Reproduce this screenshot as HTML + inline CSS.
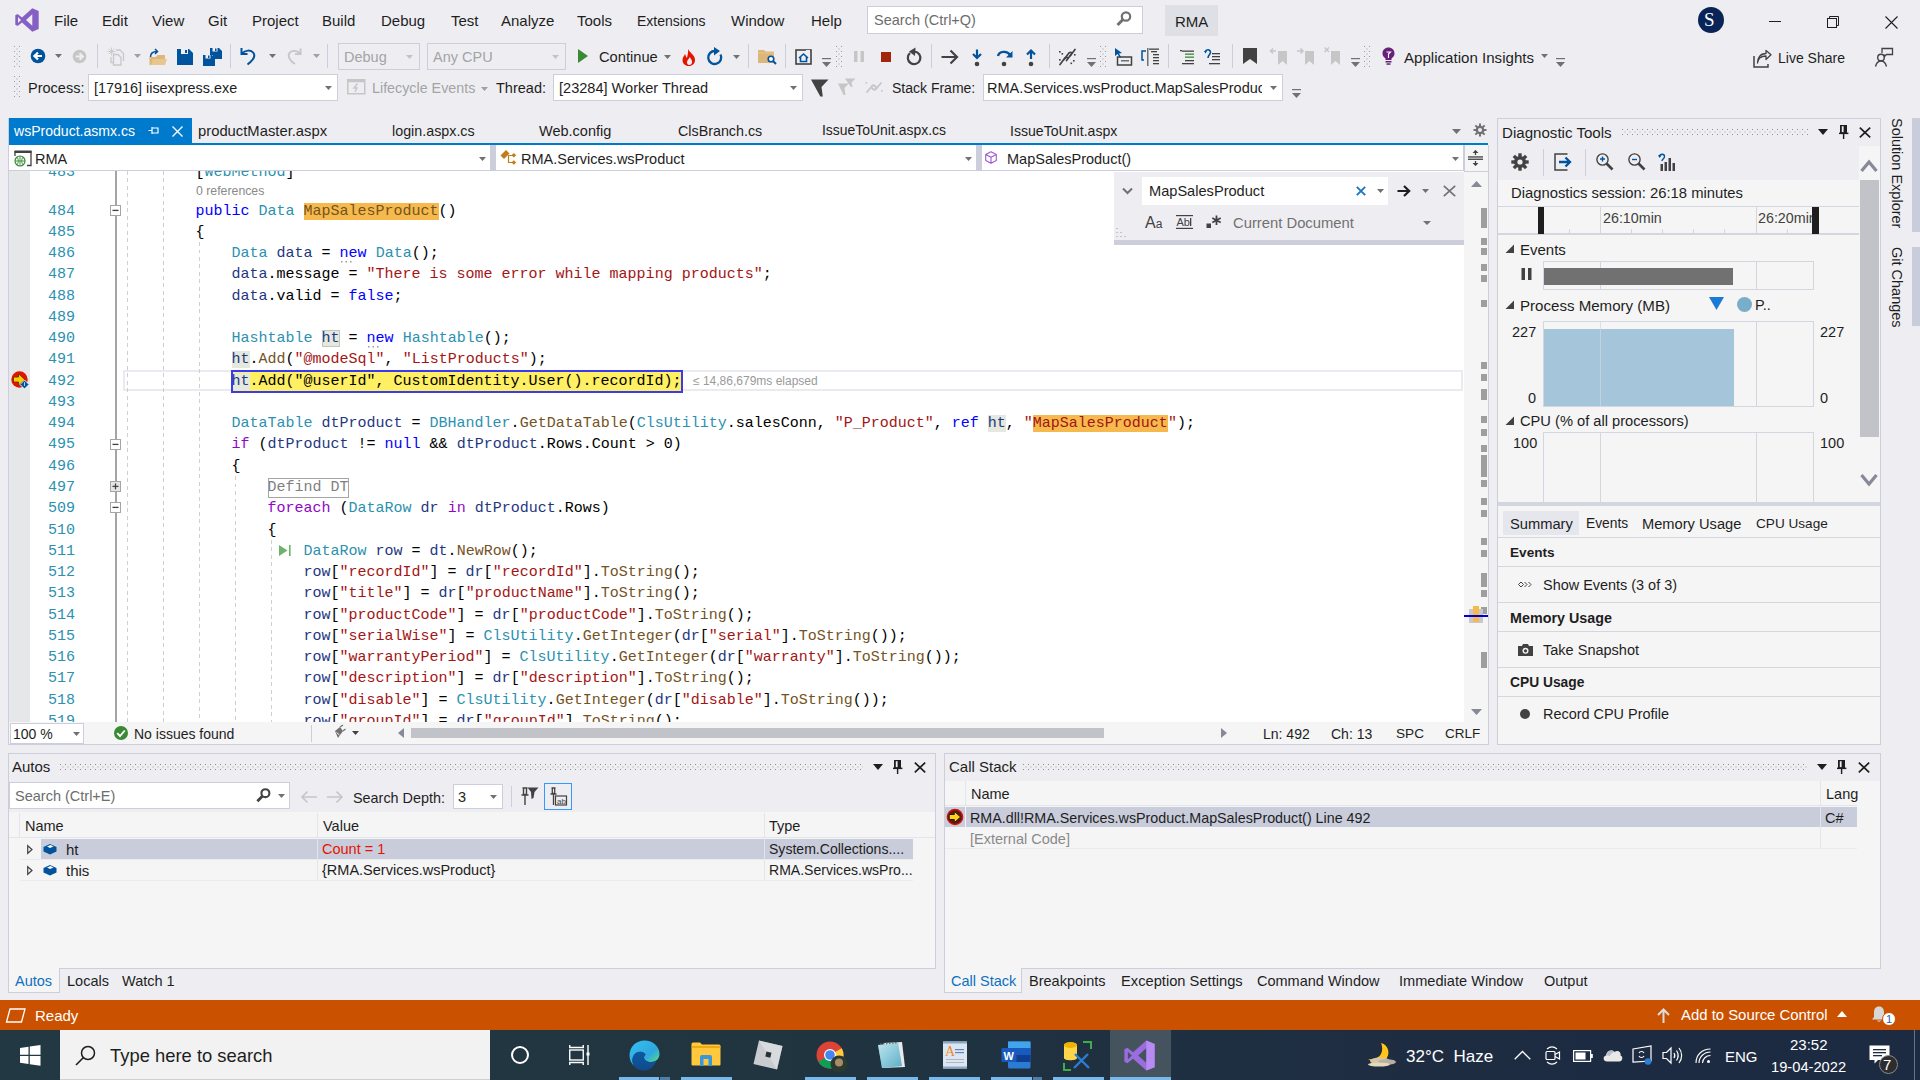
<!DOCTYPE html>
<html><head><meta charset="utf-8">
<style>
*{margin:0;padding:0;box-sizing:border-box}
html,body{width:1920px;height:1080px;overflow:hidden;background:#EEEEF2;font-family:"Liberation Sans",sans-serif;color:#1E1E1E;font-size:15px}
.a{position:absolute}
.t{position:absolute;white-space:nowrap;line-height:1}
.mono{font-family:"Liberation Mono",monospace}
svg{position:absolute;overflow:visible}
/* code */
.cl{position:absolute;left:0;height:21px;white-space:pre;font-family:"Liberation Mono",monospace;font-size:15px;line-height:21px;color:#000}
.ln{position:absolute;width:46px;text-align:right;font-family:"Liberation Mono",monospace;font-size:15px;line-height:21px;color:#2B91AF}
.k{color:#0000FF}.ty{color:#2B91AF}.s{color:#A31515}.m{color:#74531F}.v{color:#1F377F}.c{color:#8F08C4}
</style></head><body>


<!-- ===== TITLE BAR ===== -->
<svg style="left:15px;top:8px" width="24" height="24" viewBox="0 0 24 24"><path d="M17.3 0.3 L23.7 3 V21 L17.3 23.7 L7 14.6 L2.6 18 L0.3 16.8 V7.2 L2.6 6 L7 9.4 Z M17.3 6.2 L11 12 L17.3 17.8 Z M3 9 V15 L6 12 Z" fill="#865FC5" fill-rule="evenodd"/></svg>
<div class="t" style="left:54px;top:13px;font-size:15px">File</div>
<div class="t" style="left:102px;top:13px;font-size:15px">Edit</div>
<div class="t" style="left:152px;top:13px;font-size:15px">View</div>
<div class="t" style="left:208px;top:13px;font-size:15px">Git</div>
<div class="t" style="left:252px;top:13px;font-size:15px">Project</div>
<div class="t" style="left:322px;top:13px;font-size:15px">Build</div>
<div class="t" style="left:381px;top:13px;font-size:15px">Debug</div>
<div class="t" style="left:451px;top:13px;font-size:15px">Test</div>
<div class="t" style="left:501px;top:13px;font-size:15px">Analyze</div>
<div class="t" style="left:577px;top:13px;font-size:15px">Tools</div>
<div class="t" style="left:637px;top:14px;font-size:14px">Extensions</div>
<div class="t" style="left:731px;top:13px;font-size:15px">Window</div>
<div class="t" style="left:811px;top:13px;font-size:15px">Help</div>
<div class="a" style="left:867px;top:6px;width:276px;height:28px;background:#fff;border:1px solid #CCCEDB"></div>
<div class="t" style="left:874px;top:13px;font-size:14.5px;color:#6D6D6D">Search (Ctrl+Q)</div>
<svg style="left:1115px;top:10px" width="18" height="18" viewBox="0 0 18 18"><circle cx="11" cy="6.5" r="4.2" fill="none" stroke="#717171" stroke-width="2.2"/><path d="M8 9.5 L2.5 15" stroke="#717171" stroke-width="3" stroke-linecap="butt"/></svg>
<div class="a" style="left:1165px;top:5px;width:53px;height:31px;background:#DEE0E5"></div>
<div class="t" style="left:1175px;top:14px;font-size:15px;color:#1E1E1E">RMA</div>
<div class="a" style="left:1698px;top:7px;width:26px;height:26px;border-radius:50%;background:#0A2458"></div>
<div class="t" style="left:1704px;top:10px;font-size:19px;color:#fff;font-family:'Liberation Serif',serif">S</div>
<div class="a" style="left:1769px;top:21px;width:12px;height:1px;background:#1E1E1E"></div>
<svg style="left:1826px;top:15px" width="14" height="14" viewBox="0 0 14 14"><rect x="1.5" y="3.5" width="9" height="9" fill="none" stroke="#1E1E1E" stroke-width="1"/><path d="M3.5 3.5 V1.5 H12.5 V10.5 H10.5" fill="none" stroke="#1E1E1E" stroke-width="1"/></svg>
<svg style="left:1885px;top:16px" width="13" height="13" viewBox="0 0 13 13"><path d="M0.5 0.5 L12.5 12.5 M12.5 0.5 L0.5 12.5" stroke="#1E1E1E" stroke-width="1.1"/></svg>

<!-- ===== TOOLBAR 1 ===== -->
<svg style="left:14px;top:46px" width="7" height="22" viewBox="0 0 7 22"><g fill="#A0A0A8"><rect x="0" y="0" width="1" height="1"/><rect x="5" y="0" width="1" height="1"/><rect x="2.5" y="2.5" width="1" height="1"/><rect x="0" y="5" width="1" height="1"/><rect x="5" y="5" width="1" height="1"/><rect x="2.5" y="7.5" width="1" height="1"/><rect x="0" y="10" width="1" height="1"/><rect x="5" y="10" width="1" height="1"/><rect x="2.5" y="12.5" width="1" height="1"/><rect x="0" y="15" width="1" height="1"/><rect x="5" y="15" width="1" height="1"/><rect x="2.5" y="17.5" width="1" height="1"/><rect x="0" y="20" width="1" height="1"/><rect x="5" y="20" width="1" height="1"/></g></svg>
<svg style="left:30px;top:48px" width="16" height="16" viewBox="0 0 16 16"><circle cx="8" cy="8" r="7.3" fill="#00539C"/><path d="M12 8 H5 M8 4.6 L4.4 8 L8 11.4" fill="none" stroke="#fff" stroke-width="2.2"/></svg>
<svg style="left:55px;top:54px" width="7" height="4"><path d="M0 0 H7 L3.5 4 Z" fill="#717171"/></svg>
<svg style="left:72px;top:49px" width="15" height="15" viewBox="0 0 16 16"><circle cx="8" cy="8" r="7.3" fill="#C6C6C6"/><path d="M4 8 H11 M8 4.6 L11.6 8 L8 11.4" fill="none" stroke="#EEEEF2" stroke-width="2.2"/></svg>
<div class="a" style="left:97px;top:44px;width:1px;height:24px;background:#CCCEDB"></div>
<svg style="left:107px;top:47px" width="18" height="19" viewBox="0 0 18 19"><g fill="none" stroke="#C8C8C8" stroke-width="0.9"><path d="M4.5 0.5 V8.5 M0.5 4.5 H8.5 M1.7 1.7 L7.3 7.3 M7.3 1.7 L1.7 7.3"/></g><g fill="none" stroke="#C8C8C8" stroke-width="1.3"><path d="M9 3 H13 L16.5 6.5 V14"/><path d="M6.5 7.5 H11 L14 10.5 V18 H6.5 Z"/><path d="M4 10 V15.5 H6"/></g></svg>
<svg style="left:134px;top:54px" width="7" height="4"><path d="M0 0 H7 L3.5 4 Z" fill="#A0A0A0"/></svg>
<svg style="left:149px;top:48px" width="18" height="18" viewBox="0 0 18 18"><path d="M0.5 9 H7 L8.5 7 H16 V17 H0.5 Z" fill="#DCB67A"/><path d="M2 17 L4 11 H18 L16 17 Z" fill="#E8C78E"/><path d="M1.5 9 C1.5 5 4 3.5 8 3.5 M6 1 L8.5 3.5 L6 6" fill="none" stroke="#00539C" stroke-width="1.5"/></svg>
<svg style="left:177px;top:49px" width="16" height="16" viewBox="0 0 16 16"><path d="M0 0 H12 L16 4 V16 H0 Z" fill="#00539C"/><rect x="4" y="0" width="7" height="5" fill="#EEEEF2"/><rect x="8" y="1" width="2" height="3" fill="#00539C"/></svg>
<svg style="left:203px;top:48px" width="19" height="18" viewBox="0 0 19 18"><path d="M7 0 H16 L19 3 V11 H10 V7 H7 Z" fill="#00539C"/><rect x="9.5" y="0" width="5" height="3.5" fill="#EEEEF2"/><rect x="12" y="0.5" width="1.5" height="2.5" fill="#00539C"/><path d="M0 7 H9 L12 10 V18 H0 Z" fill="#00539C"/><rect x="2.5" y="7" width="5" height="3.5" fill="#EEEEF2"/><rect x="5" y="7.5" width="1.5" height="2.5" fill="#00539C"/></svg>
<div class="a" style="left:230px;top:44px;width:1px;height:24px;background:#CCCEDB"></div>
<svg style="left:240px;top:47px" width="18" height="18" viewBox="0 0 18 18"><path d="M1.5 1 V7 H7.5" fill="none" stroke="#00539C" stroke-width="2"/><path d="M2 6.5 C5 3 11 2.5 13.5 6 C15.5 9 13.5 13 7.5 17.5" fill="none" stroke="#00539C" stroke-width="2"/></svg>
<svg style="left:269px;top:54px" width="7" height="4"><path d="M0 0 H7 L3.5 4 Z" fill="#717171"/></svg>
<svg style="left:285px;top:47px" width="17" height="18" viewBox="0 0 18 18"><path d="M16.5 1 V7 H10.5" fill="none" stroke="#C6C6C6" stroke-width="2"/><path d="M16 6.5 C13 3 7 2.5 4.5 6 C2.5 9 4.5 13 10.5 17.5" fill="none" stroke="#C6C6C6" stroke-width="2"/></svg>
<svg style="left:313px;top:54px" width="7" height="4"><path d="M0 0 H7 L3.5 4 Z" fill="#A0A0A0"/></svg>
<div class="a" style="left:327px;top:44px;width:1px;height:24px;background:#CCCEDB"></div>
<div class="a" style="left:338px;top:43px;width:82px;height:27px;border:1px solid #CCCEDB"></div>
<div class="t" style="left:344px;top:50px;font-size:14.5px;color:#A2A4A5">Debug</div>
<svg style="left:406px;top:55px" width="7" height="4"><path d="M0 0 H7 L3.5 4 Z" fill="#C2C3C9"/></svg>
<div class="a" style="left:427px;top:43px;width:139px;height:27px;border:1px solid #CCCEDB"></div>
<div class="t" style="left:433px;top:50px;font-size:14.5px;color:#A2A4A5">Any CPU</div>
<svg style="left:552px;top:55px" width="7" height="4"><path d="M0 0 H7 L3.5 4 Z" fill="#C2C3C9"/></svg>
<svg style="left:578px;top:49px" width="11" height="14"><path d="M0 0 L10 7 L0 14 Z" fill="#388A34"/></svg>
<div class="t" style="left:599px;top:50px;font-size:14.7px">Continue</div>
<svg style="left:664px;top:55px" width="7" height="4"><path d="M0 0 H7 L3.5 4 Z" fill="#717171"/></svg>
<svg style="left:682px;top:49px" width="14" height="17" viewBox="0 0 14 17"><path d="M6 0 C8 4 13 6 13 11 C13 14.5 10.5 17 7 17 C3 17 0.5 14.5 0.5 11 C0.5 8 2.5 6.5 3 5 C4 7 4 8 5 9 C5.5 6 6.5 3 6 0 Z M7 16 C9 16 10.5 14.5 10 12 C9.5 10 8 9 8 8 C7 10 5 11 5 13.5 C5 15 6 16 7 16 Z" fill="#E51400" fill-rule="evenodd"/></svg>
<svg style="left:707px;top:47px" width="18" height="19" viewBox="0 0 18 19"><path d="M13.5 7.5 A6.5 6.5 0 1 1 8 4" fill="none" stroke="#00539C" stroke-width="2.3"/><path d="M7 0 L13 4 L7 8.5 Z" fill="#00539C"/></svg>
<svg style="left:733px;top:55px" width="7" height="4"><path d="M0 0 H7 L3.5 4 Z" fill="#717171"/></svg>
<div class="a" style="left:748px;top:44px;width:1px;height:24px;background:#CCCEDB"></div>
<svg style="left:758px;top:49px" width="19" height="16" viewBox="0 0 19 16"><path d="M0 1 H6 L7.5 2.5 H16 V14 H0 Z" fill="#DCB67A"/><path d="M0 4 H16" stroke="#E8C78E" stroke-width="1"/><circle cx="13" cy="10" r="2.8" fill="#fff" stroke="#00539C" stroke-width="1.6"/><path d="M15 12 L18 15" stroke="#00539C" stroke-width="2"/></svg>
<div class="a" style="left:785px;top:44px;width:1px;height:24px;background:#CCCEDB"></div>
<svg style="left:795px;top:49px" width="17" height="16" viewBox="0 0 17 16"><rect x="1" y="1" width="15" height="14" fill="none" stroke="#424242" stroke-width="1.6"/><path d="M4 9 L8.5 5 L13 9 M5.5 8 V12.5 H11.5 V8" fill="none" stroke="#00539C" stroke-width="1.6"/><rect x="11" y="1" width="4" height="1.5" fill="#EEEEF2"/></svg>
<svg style="left:822px;top:58px" width="9" height="9" viewBox="0 0 9 9"><rect x="0" y="0" width="9" height="1.2" fill="#717171"/><path d="M0 4 H9 L4.5 9 Z" fill="#717171"/></svg>


<svg style="left:836px;top:46px" width="7" height="22" viewBox="0 0 7 22"><g fill="#9A9AA2"><rect x="0" y="0" width="1" height="1"/><rect x="5" y="0" width="1" height="1"/><rect x="2.5" y="2.5" width="1" height="1"/><rect x="0" y="5" width="1" height="1"/><rect x="5" y="5" width="1" height="1"/><rect x="2.5" y="7.5" width="1" height="1"/><rect x="0" y="10" width="1" height="1"/><rect x="5" y="10" width="1" height="1"/><rect x="2.5" y="12.5" width="1" height="1"/><rect x="0" y="15" width="1" height="1"/><rect x="5" y="15" width="1" height="1"/><rect x="2.5" y="17.5" width="1" height="1"/><rect x="0" y="20" width="1" height="1"/><rect x="5" y="20" width="1" height="1"/></g></svg><svg style="left:854px;top:51px" width="11" height="12"><rect x="0" y="0" width="3.5" height="11" fill="#C6C6C6"/><rect x="6.5" y="0" width="3.5" height="11" fill="#C6C6C6"/></svg><div class="a" style="left:881px;top:52px;width:10px;height:10px;background:#A1260D"></div><svg style="left:905px;top:47px" width="17" height="19" viewBox="0 0 17 19"><path d="M5 6 A6.3 6.3 0 1 0 9.5 4.5" fill="none" stroke="#424242" stroke-width="2.2"/><path d="M10.5 0.5 L4 4.5 L10 9 Z" fill="#424242"/></svg><div class="a" style="left:931px;top:44px;width:1px;height:24px;background:#CCCEDB"></div><svg style="left:941px;top:49px" width="18" height="16" viewBox="0 0 18 16"><path d="M0.5 8 H16 M9.5 1.5 L16 8 L9.5 14.5" fill="none" stroke="#424242" stroke-width="2.2"/></svg><svg style="left:971px;top:49px" width="12" height="18" viewBox="0 0 12 18"><path d="M6 0.5 V9 M2 5 L6 9 L10 5" fill="none" stroke="#00539C" stroke-width="2.2"/><circle cx="6" cy="15" r="2.3" fill="#424242"/></svg><svg style="left:996px;top:48px" width="17" height="19" viewBox="0 0 17 19"><path d="M2 8 C3 3.5 11 2 14 7" fill="none" stroke="#00539C" stroke-width="2.3"/><path d="M16.5 3 V9.5 H10 Z" fill="#00539C"/><circle cx="8" cy="16" r="2.3" fill="#424242"/></svg><svg style="left:1025px;top:49px" width="12" height="18" viewBox="0 0 12 18"><path d="M6 10 V1.5 M2 5.5 L6 1.5 L10 5.5" fill="none" stroke="#00539C" stroke-width="2.2"/><circle cx="6" cy="15" r="2.3" fill="#424242"/></svg><div class="a" style="left:1049px;top:44px;width:1px;height:24px;background:#CCCEDB"></div><svg style="left:1058px;top:48px" width="19" height="18" viewBox="0 0 19 18"><g fill="none" stroke="#424242" stroke-width="1.7" stroke-linecap="round"><path d="M2 16.5 L6.5 10.5 C7.5 9 9 9 10 10 M8.5 12.5 L13 6.5"/><path d="M6 11.5 L10.5 5.5 C11.5 4 13 4 14 5 M12.5 7.5 L17 1.5"/></g><g fill="#424242"><rect x="1" y="3" width="1.6" height="1.6"/><rect x="3.5" y="5" width="1.6" height="1.6"/><rect x="15" y="12" width="1.6" height="1.6"/><rect x="12.5" y="14.5" width="1.6" height="1.6"/><rect x="1" y="11" width="1.6" height="1.6"/><rect x="16" y="6" width="1.6" height="1.6"/></g></svg><svg style="left:1087px;top:58px" width="9" height="9" viewBox="0 0 9 9"><rect x="0" y="0" width="9" height="1.2" fill="#717171"/><path d="M0 4 H9 L4.5 9 Z" fill="#717171"/></svg><svg style="left:1100px;top:46px" width="7" height="22" viewBox="0 0 7 22"><g fill="#9A9AA2"><rect x="0" y="0" width="1" height="1"/><rect x="5" y="0" width="1" height="1"/><rect x="2.5" y="2.5" width="1" height="1"/><rect x="0" y="5" width="1" height="1"/><rect x="5" y="5" width="1" height="1"/><rect x="2.5" y="7.5" width="1" height="1"/><rect x="0" y="10" width="1" height="1"/><rect x="5" y="10" width="1" height="1"/><rect x="2.5" y="12.5" width="1" height="1"/><rect x="0" y="15" width="1" height="1"/><rect x="5" y="15" width="1" height="1"/><rect x="2.5" y="17.5" width="1" height="1"/><rect x="0" y="20" width="1" height="1"/><rect x="5" y="20" width="1" height="1"/></g></svg><svg style="left:1115px;top:48px" width="18" height="18" viewBox="0 0 18 18"><path d="M0 0 L0 8 L2.5 6 L5 10 L6 9 L4 5.5 L7 5 Z" fill="#00539C"/><rect x="2.5" y="9" width="14" height="8" fill="none" stroke="#424242" stroke-width="1.5"/><rect x="6" y="12" width="8" height="1.5" fill="#717171"/></svg><svg style="left:1141px;top:48px" width="19" height="18" viewBox="0 0 19 18"><path d="M3 3 H1 V12 H3" fill="none" stroke="#00539C" stroke-width="1.5"/><path d="M3 3 H5" stroke="#00539C" stroke-width="1.5"/><rect x="6" y="0" width="1.5" height="18" fill="#717171"/><g fill="#424242"><rect x="8" y="0.5" width="10" height="1.3"/><rect x="10" y="3" width="6" height="1.3"/><rect x="12" y="6" width="6" height="1.3"/><rect x="12" y="9" width="6" height="1.3"/><rect x="12" y="12" width="6" height="1.3"/><rect x="12" y="15" width="6" height="1.3"/></g></svg><div class="a" style="left:1168px;top:44px;width:1px;height:24px;background:#CCCEDB"></div><svg style="left:1180px;top:50px" width="14" height="14" viewBox="0 0 14 14"><g fill="#424242"><rect x="0" y="0" width="2" height="1.3"/><rect x="2" y="0.5" width="12" height="1.3"/><rect x="5" y="10" width="9" height="1.3"/><rect x="2" y="13" width="12" height="1.3"/></g><rect x="5" y="3.5" width="9" height="1.3" fill="#388A34"/><rect x="5" y="6.5" width="9" height="1.3" fill="#388A34"/></svg><svg style="left:1204px;top:49px" width="17" height="16" viewBox="0 0 17 16"><path d="M1 3 C2 0 6 0 6.5 3 C7 5 4 6 4 9" fill="none" stroke="#00539C" stroke-width="1.6"/><path d="M0 2 L1.5 4.5 L3 2 Z" fill="#00539C"/><g fill="#424242"><rect x="8" y="4" width="8" height="1.3"/><rect x="8" y="7" width="8" height="1.3"/><rect x="8" y="10" width="8" height="1.3"/><rect x="5" y="14" width="11" height="1.3"/></g></svg><div class="a" style="left:1232px;top:44px;width:1px;height:24px;background:#CCCEDB"></div><svg style="left:1243px;top:48px" width="14" height="17"><path d="M0 0 H14 V16 L7 11 L0 16 Z" fill="#424242"/></svg><svg style="left:1270px;top:48px" width="19" height="17" viewBox="0 0 19 17"><path d="M8 3 H17 V17 L12.5 13 L8 17 Z" fill="#C6C6C6"/><path d="M0 3 H6 M3 0.5 L0.5 3 L3 5.5" fill="none" stroke="#C6C6C6" stroke-width="1.5"/></svg><svg style="left:1297px;top:48px" width="19" height="17" viewBox="0 0 19 17"><path d="M8 3 H17 V17 L12.5 13 L8 17 Z" fill="#C6C6C6"/><path d="M0 3 H6 M3.5 0.5 L6 3 L3.5 5.5" fill="none" stroke="#C6C6C6" stroke-width="1.5"/></svg><svg style="left:1324px;top:47px" width="17" height="18" viewBox="0 0 17 18"><path d="M7 4 H16 V18 L11.5 14 L7 18 Z" fill="#C6C6C6"/><path d="M0.5 0.5 L5 5 M5 0.5 L0.5 5" stroke="#C6C6C6" stroke-width="1.4"/></svg><svg style="left:1351px;top:58px" width="9" height="9" viewBox="0 0 9 9"><rect x="0" y="0" width="9" height="1.2" fill="#717171"/><path d="M0 4 H9 L4.5 9 Z" fill="#717171"/></svg><svg style="left:1364px;top:46px" width="7" height="22" viewBox="0 0 7 22"><g fill="#9A9AA2"><rect x="0" y="0" width="1" height="1"/><rect x="5" y="0" width="1" height="1"/><rect x="2.5" y="2.5" width="1" height="1"/><rect x="0" y="5" width="1" height="1"/><rect x="5" y="5" width="1" height="1"/><rect x="2.5" y="7.5" width="1" height="1"/><rect x="0" y="10" width="1" height="1"/><rect x="5" y="10" width="1" height="1"/><rect x="2.5" y="12.5" width="1" height="1"/><rect x="0" y="15" width="1" height="1"/><rect x="5" y="15" width="1" height="1"/><rect x="2.5" y="17.5" width="1" height="1"/><rect x="0" y="20" width="1" height="1"/><rect x="5" y="20" width="1" height="1"/></g></svg><svg style="left:1382px;top:47px" width="13" height="18" viewBox="0 0 13 18"><path d="M6.5 0.5 C10 0.5 12.5 3 12.5 6.5 C12.5 9 11 10 9.5 11.5 V13 H3.5 V11.5 C2 10 0.5 9 0.5 6.5 C0.5 3 3 0.5 6.5 0.5 Z" fill="#68217A"/><path d="M4.5 5 H8.5 L6.5 7 V11" fill="none" stroke="#fff" stroke-width="1.1"/><rect x="3.5" y="14" width="6" height="1.5" fill="#68217A"/><rect x="4.5" y="16.3" width="4" height="1.5" fill="#68217A"/></svg><div class="t" style="left:1404px;top:50px;font-size:15.1px">Application Insights</div><svg style="left:1541px;top:54px" width="7" height="4"><path d="M0 0 H7 L3.5 4 Z" fill="#717171"/></svg><svg style="left:1556px;top:58px" width="9" height="9" viewBox="0 0 9 9"><rect x="0" y="0" width="9" height="1.2" fill="#717171"/><path d="M0 4 H9 L4.5 9 Z" fill="#717171"/></svg><svg style="left:1753px;top:50px" width="19" height="18" viewBox="0 0 19 18"><path d="M1 6 V17 H15 V14" fill="none" stroke="#424242" stroke-width="1.5"/><path d="M4.5 13 C5 8 8 6 13 6 V9.5 L18 4.8 L13 0.5 V3.5 C7 3.5 4.5 8 4.5 13 Z" fill="none" stroke="#424242" stroke-width="1.3" stroke-linejoin="round"/></svg><div class="t" style="left:1778px;top:51px;font-size:14px">Live Share</div><svg style="left:1875px;top:48px" width="19" height="19" viewBox="0 0 19 19"><circle cx="6" cy="9.5" r="3.3" fill="none" stroke="#424242" stroke-width="1.4"/><path d="M0.5 18.5 C1.5 14.5 4 13 6 13 C8 13 10.5 14.5 11.5 18.5" fill="none" stroke="#424242" stroke-width="1.4"/><path d="M7 5 V0.5 H17.5 V6.5 H11.5 L9.5 8.5 V6.5" fill="none" stroke="#424242" stroke-width="1.3"/></svg>
<!-- ===== TOOLBAR 2 ===== -->
<svg style="left:14px;top:76px" width="7" height="22" viewBox="0 0 7 22"><g fill="#9A9AA2"><rect x="0" y="0" width="1" height="1"/><rect x="5" y="0" width="1" height="1"/><rect x="2.5" y="2.5" width="1" height="1"/><rect x="0" y="5" width="1" height="1"/><rect x="5" y="5" width="1" height="1"/><rect x="2.5" y="7.5" width="1" height="1"/><rect x="0" y="10" width="1" height="1"/><rect x="5" y="10" width="1" height="1"/><rect x="2.5" y="12.5" width="1" height="1"/><rect x="0" y="15" width="1" height="1"/><rect x="5" y="15" width="1" height="1"/><rect x="2.5" y="17.5" width="1" height="1"/><rect x="0" y="20" width="1" height="1"/><rect x="5" y="20" width="1" height="1"/></g></svg><div class="t" style="left:28px;top:81px;font-size:14.5px">Process:</div><div class="a" style="left:88px;top:74px;width:250px;height:27px;background:#fff;border:1px solid #CCCEDB"></div><div class="t" style="left:94px;top:81px;font-size:14.4px">[17916] iisexpress.exe</div><svg style="left:325px;top:86px" width="7" height="4"><path d="M0 0 H7 L3.5 4 Z" fill="#717171"/></svg><svg style="left:347px;top:79px" width="19" height="16" viewBox="0 0 19 16"><rect x="0.75" y="0.75" width="17" height="14" fill="none" stroke="#C6C6C6" stroke-width="1.5"/><rect x="0.75" y="0.75" width="17" height="2.5" fill="#C6C6C6"/><path d="M10.5 4.5 L7 9 H10 L8 13" fill="none" stroke="#C6C6C6" stroke-width="1.4"/></svg><div class="t" style="left:372px;top:81px;font-size:14.3px;color:#A2A4A5">Lifecycle Events</div><svg style="left:481px;top:87px" width="7" height="4"><path d="M0 0 H7 L3.5 4 Z" fill="#A0A0A0"/></svg><div class="t" style="left:496px;top:81px;font-size:14.5px">Thread:</div><div class="a" style="left:553px;top:74px;width:250px;height:27px;background:#fff;border:1px solid #CCCEDB"></div><div class="t" style="left:559px;top:81px;font-size:14.55px">[23284] Worker Thread</div><svg style="left:790px;top:86px" width="7" height="4"><path d="M0 0 H7 L3.5 4 Z" fill="#717171"/></svg><svg style="left:811px;top:79px" width="18" height="18" viewBox="0 0 18 18"><path d="M0 0.5 H17.5 L10.5 8 L11.8 17.5 H9.3 Z" fill="#424242"/></svg><svg style="left:838px;top:78px" width="18" height="18" viewBox="0 0 18 18"><path d="M7 0.5 H17.5 L13.5 4.5 L14.5 9 H13 Z" fill="#C6C6C6"/><path d="M0 5.5 H11 L6.5 10 L7.5 17 H5.5 Z" fill="#C6C6C6"/></svg><svg style="left:865px;top:80px" width="18" height="14" viewBox="0 0 18 14"><g fill="none" stroke="#C6C6C6" stroke-width="1.8" stroke-linecap="round"><path d="M2 12 L7 6 C8 5 9 5 10 6 L11 7"/><path d="M7 8 L8 9 C9 10 10 10 11 9 L16 3"/></g><rect x="0.5" y="2" width="1.6" height="1.6" fill="#C6C6C6"/><rect x="16" y="10" width="1.6" height="1.6" fill="#C6C6C6"/></svg><div class="t" style="left:892px;top:81px;font-size:14px">Stack Frame:</div><div class="a" style="left:983px;top:74px;width:300px;height:27px;background:#fff;border:1px solid #CCCEDB"></div><div class="a" style="left:987px;top:76px;width:275px;height:22px;overflow:hidden"><div class="t" style="left:0px;top:5px;font-size:14.5px">RMA.Services.wsProduct.MapSalesProduct()</div></div><svg style="left:1270px;top:86px" width="7" height="4"><path d="M0 0 H7 L3.5 4 Z" fill="#717171"/></svg><svg style="left:1292px;top:89px" width="9" height="9" viewBox="0 0 9 9"><rect x="0" y="0" width="9" height="1.2" fill="#717171"/><path d="M0 4 H9 L4.5 9 Z" fill="#717171"/></svg>
<!-- ===== DOC TAB WELL / EDITOR ===== -->
<div class="a" style="left:9px;top:118px;width:183px;height:25px;background:#007ACC"></div>
<div class="t" style="left:14px;top:124px;font-size:14.05px;color:#fff">wsProduct.asmx.cs</div>
<svg style="left:148px;top:125px" width="11" height="11" viewBox="0 0 11 11"><path d="M0.5 5.5 H4 M4 2 V9 M4 3 H10 V8 H4" fill="none" stroke="#fff" stroke-width="1.2"/></svg>
<svg style="left:172px;top:126px" width="11" height="11" viewBox="0 0 11 11"><path d="M0.5 0.5 L10.5 10.5 M10.5 0.5 L0.5 10.5" stroke="#fff" stroke-width="1.4"/></svg>
<div class="t" style="left:198px;top:124px;font-size:14.8px">productMaster.aspx</div>
<div class="t" style="left:392px;top:124px;font-size:14.3px">login.aspx.cs</div>
<div class="t" style="left:539px;top:124px;font-size:14.5px">Web.config</div>
<div class="t" style="left:678px;top:124px;font-size:14.3px">ClsBranch.cs</div>
<div class="t" style="left:822px;top:124px;font-size:13.95px">IssueToUnit.aspx.cs</div>
<div class="t" style="left:1010px;top:124px;font-size:14.1px">IssueToUnit.aspx</div>
<svg style="left:1452px;top:129px" width="9" height="5"><path d="M0 0 H9 L4.5 5 Z" fill="#717171"/></svg>
<svg style="left:1473px;top:123px" width="14" height="14" viewBox="0 0 14 14"><g fill="#717171"><circle cx="7" cy="7" r="4.3"/><rect x="6" y="0.5" width="2" height="13"/><rect x="0.5" y="6" width="13" height="2"/><rect x="6" y="0.5" width="2" height="13" transform="rotate(45 7 7)"/><rect x="6" y="0.5" width="2" height="13" transform="rotate(-45 7 7)"/></g><circle cx="7" cy="7" r="2" fill="#EEEEF2"/></svg>
<div class="a" style="left:9px;top:143px;width:1479px;height:2px;background:#007ACC"></div>
<div class="a" style="left:9px;top:145px;width:1479px;height:27px;background:#fff"></div>
<div class="a" style="left:9px;top:170px;width:1479px;height:2px;background:#CCCEDB"></div>
<div class="a" style="left:490px;top:145px;width:6px;height:26px;background:#CCCEDB"></div>
<div class="a" style="left:976px;top:145px;width:6px;height:26px;background:#CCCEDB"></div>
<div class="a" style="left:1463px;top:145px;width:2px;height:27px;background:#CCCEDB"></div>
<div class="a" style="left:1465px;top:145px;width:23px;height:26px;background:#F5F5F5"></div>
<svg style="left:14px;top:150px" width="18" height="17" viewBox="0 0 18 17"><rect x="0.5" y="0.5" width="17" height="2.5" fill="#424242"/><path d="M17 1 V15.5 H13" fill="none" stroke="#424242" stroke-width="1.3"/><path d="M1 1 V6" stroke="#424242" stroke-width="1.3"/><circle cx="6" cy="11" r="5" fill="#fff" stroke="#388A34" stroke-width="1.2"/><path d="M1 11 H11 M6 6 V16 M3.5 7.5 C4.5 10 4.5 12 3.5 14.5 M8.5 7.5 C7.5 10 7.5 12 8.5 14.5" fill="none" stroke="#388A34" stroke-width="0.9"/></svg>
<div class="t" style="left:35px;top:152px;font-size:14.5px">RMA</div>
<svg style="left:479px;top:157px" width="7" height="4"><path d="M0 0 H7 L3.5 4 Z" fill="#717171"/></svg>
<svg style="left:500px;top:149px" width="18" height="18" viewBox="0 0 18 18"><path d="M0.5 6.5 L6 1 L9.5 4.5 L4 10 Z" fill="#C27D1A"/><path d="M8 6.5 H13 M8.5 6.5 V13.5 H13" fill="none" stroke="#C27D1A" stroke-width="1.2"/><path d="M11.5 6.3 L13.8 4 L16.2 6.3 L13.8 8.6 Z M11.5 13.5 L13.8 11.2 L16.2 13.5 L13.8 15.8 Z" fill="#C27D1A"/></svg>
<div class="t" style="left:521px;top:152px;font-size:14.5px">RMA.Services.wsProduct</div>
<svg style="left:965px;top:157px" width="7" height="4"><path d="M0 0 H7 L3.5 4 Z" fill="#717171"/></svg>
<svg style="left:985px;top:151px" width="12" height="13" viewBox="0 0 12 13"><path d="M6 0.7 L11.3 3.5 V9.5 L6 12.3 L0.7 9.5 V3.5 Z M0.7 3.5 L6 6.3 L11.3 3.5 M6 6.3 V12.3" fill="none" stroke="#9B59D0" stroke-width="1.1" stroke-linejoin="round"/></svg>
<div class="t" style="left:1007px;top:152px;font-size:14.5px">MapSalesProduct()</div>
<svg style="left:1452px;top:157px" width="7" height="4"><path d="M0 0 H7 L3.5 4 Z" fill="#717171"/></svg>
<svg style="left:1468px;top:150px" width="15" height="16" viewBox="0 0 15 16"><rect x="0" y="6.3" width="15" height="1.3" fill="#424242"/><rect x="0" y="8.6" width="15" height="1.3" fill="#424242"/><path d="M7.5 0.5 V5 M7.5 11 V15.5" stroke="#424242" stroke-width="1.3"/><path d="M4.5 3 L7.5 0 L10.5 3 Z M4.5 13 L7.5 16 L10.5 13 Z" fill="#424242"/></svg>
<div class="a" style="left:1464px;top:172px;width:24px;height:551px;background:#F5F5F5"></div>
<svg style="left:1471px;top:181px" width="11" height="6"><path d="M0 6 L5.5 0 L11 6 Z" fill="#868999"/></svg>
<svg style="left:1471px;top:709px" width="11" height="6"><path d="M0 0 L5.5 6 L11 0 Z" fill="#868999"/></svg>
<div class="a" style="left:1481px;top:208px;width:6px;height:20px;background:#9E9E9E"></div>
<div class="a" style="left:1481px;top:238px;width:6px;height:7px;background:#9E9E9E"></div>
<div class="a" style="left:1481px;top:248px;width:6px;height:7px;background:#9E9E9E"></div>
<div class="a" style="left:1481px;top:264px;width:6px;height:7px;background:#9E9E9E"></div>
<div class="a" style="left:1481px;top:275px;width:6px;height:7px;background:#9E9E9E"></div>
<div class="a" style="left:1481px;top:300px;width:6px;height:7px;background:#9E9E9E"></div>
<div class="a" style="left:1481px;top:362px;width:6px;height:7px;background:#9E9E9E"></div>
<div class="a" style="left:1481px;top:374px;width:6px;height:7px;background:#9E9E9E"></div>
<div class="a" style="left:1481px;top:389px;width:6px;height:11px;background:#9E9E9E"></div>
<div class="a" style="left:1481px;top:416px;width:6px;height:7px;background:#9E9E9E"></div>
<div class="a" style="left:1481px;top:429px;width:6px;height:7px;background:#9E9E9E"></div>
<div class="a" style="left:1481px;top:445px;width:6px;height:7px;background:#9E9E9E"></div>
<div class="a" style="left:1481px;top:455px;width:6px;height:22px;background:#9E9E9E"></div>
<div class="a" style="left:1481px;top:480px;width:6px;height:7px;background:#9E9E9E"></div>
<div class="a" style="left:1481px;top:498px;width:6px;height:7px;background:#9E9E9E"></div>
<div class="a" style="left:1481px;top:510px;width:6px;height:7px;background:#9E9E9E"></div>
<div class="a" style="left:1481px;top:538px;width:6px;height:7px;background:#9E9E9E"></div>
<div class="a" style="left:1481px;top:550px;width:6px;height:7px;background:#9E9E9E"></div>
<div class="a" style="left:1481px;top:573px;width:6px;height:14px;background:#9E9E9E"></div>
<div class="a" style="left:1481px;top:590px;width:6px;height:7px;background:#9E9E9E"></div>
<div class="a" style="left:1481px;top:607px;width:6px;height:7px;background:#9E9E9E"></div>
<div class="a" style="left:1481px;top:652px;width:6px;height:16px;background:#9E9E9E"></div>
<div class="a" style="left:1469px;top:609px;width:14px;height:14px;background:#C8C8CC"></div>
<div class="a" style="left:1473px;top:606px;width:6px;height:16px;background:#F6B94D"></div>
<div class="a" style="left:1464px;top:615px;width:24px;height:2px;background:#0000CD"></div>
<div class="a" style="left:9px;top:722px;width:1479px;height:22px;background:#F5F5F5"></div>
<div class="a" style="left:8px;top:744px;width:1481px;height:1px;background:#CCCEDB"></div>
<div class="a" style="left:8px;top:118px;width:1px;height:627px;background:#CCCEDB"></div>
<div class="a" style="left:1488px;top:145px;width:1px;height:600px;background:#CCCEDB"></div>
<div class="a" style="left:10px;top:723px;width:74px;height:21px;background:#fff;border:1px solid #CCCEDB"></div>
<div class="t" style="left:13px;top:727px;font-size:14px">100 %</div>
<svg style="left:73px;top:732px" width="7" height="4"><path d="M0 0 H7 L3.5 4 Z" fill="#717171"/></svg>
<svg style="left:114px;top:726px" width="14" height="14" viewBox="0 0 14 14"><circle cx="7" cy="7" r="7" fill="#388A34"/><path d="M3.2 7.2 L6 10 L10.8 4.5" fill="none" stroke="#fff" stroke-width="1.9"/></svg>
<div class="t" style="left:134px;top:727px;font-size:14.0px">No issues found</div>
<div class="a" style="left:311px;top:725px;width:1px;height:17px;background:#CCCEDB"></div>
<svg style="left:331px;top:725px" width="15" height="15" viewBox="0 0 15 15"><path d="M4 6 L9 2 L12 6 L7 13 Z" fill="#717171"/><path d="M9 2 L12 0 M12 6 L14.5 4" stroke="#717171" stroke-width="1.2"/><path d="M5.5 7.5 L8.5 10" stroke="#F5F5F5" stroke-width="1"/></svg>
<svg style="left:352px;top:731px" width="7" height="4"><path d="M0 0 H7 L3.5 4 Z" fill="#424242"/></svg>
<svg style="left:398px;top:728px" width="6" height="10"><path d="M6 0 L0 5 L6 10 Z" fill="#868999"/></svg>
<div class="a" style="left:411px;top:728px;width:693px;height:10px;background:#C2C3C9"></div>
<svg style="left:1221px;top:728px" width="6" height="10"><path d="M0 0 L6 5 L0 10 Z" fill="#868999"/></svg>
<div class="t" style="left:1263px;top:727px;font-size:14px">Ln: 492</div>
<div class="t" style="left:1331px;top:727px;font-size:14px">Ch: 13</div>
<div class="t" style="left:1396px;top:727px;font-size:13.6px">SPC</div>
<div class="t" style="left:1445px;top:727px;font-size:13.5px">CRLF</div>
<div class="a" style="left:9px;top:171px;width:1455px;height:551px;overflow:hidden;background:#fff">
<div class="a" style="left:0;top:0;width:21px;height:551px;background:#E6E7E8"></div>
<div class="a" style="left:113.5px;top:199px;width:1340.5px;height:21px;border:2px solid #EAEAF0"></div>
<div class="a" style="left:118px;top:0px;width:1px;height:551px;background:repeating-linear-gradient(to bottom,#CFCFCF 0 3.75px,transparent 3.75px 7.5px)"></div>
<div class="a" style="left:154px;top:0px;width:1px;height:551px;background:repeating-linear-gradient(to bottom,#CFCFCF 0 3.75px,transparent 3.75px 7.5px)"></div>
<div class="a" style="left:190px;top:71px;width:1px;height:480px;background:repeating-linear-gradient(to bottom,#CFCFCF 0 3.75px,transparent 3.75px 7.5px)"></div>
<div class="a" style="left:226px;top:305px;width:1px;height:246px;background:repeating-linear-gradient(to bottom,#CFCFCF 0 3.75px,transparent 3.75px 7.5px)"></div>
<div class="a" style="left:262px;top:369px;width:1px;height:182px;background:repeating-linear-gradient(to bottom,#CFCFCF 0 3.75px,transparent 3.75px 7.5px)"></div>
<div class="a" style="left:106px;top:0;width:2px;height:551px;background:#A5A5A5"></div>
<div class="cl" style="left:114.5px;top:-9px">        [<span class="ty">WebMethod</span>]</div>
<div class="ln" style="left:20px;top:-9px">483</div>
<div class="t" style="left:187px;top:14px;font-size:12.3px;color:#8A8A8A">0 references</div>
<div class="ln" style="left:20px;top:30px">484</div>
<div class="cl" style="left:114.5px;top:30px">        <span class="k">public</span> <span class="ty">Data</span> <span class="m" style="background:#F6B94D">MapSalesProduct</span>()</div>
<div class="ln" style="left:20px;top:51px">485</div>
<div class="cl" style="left:114.5px;top:51px">        {</div>
<div class="ln" style="left:20px;top:72px">486</div>
<div class="cl" style="left:114.5px;top:72px">            <span class="ty">Data</span> <span class="v">data</span> = <span class="k">new</span> <span class="ty">Data</span>();</div>
<div class="ln" style="left:20px;top:93px">487</div>
<div class="cl" style="left:114.5px;top:93px">            <span class="v">data</span>.message = <span class="s">&quot;There is some error while mapping products&quot;</span>;</div>
<div class="ln" style="left:20px;top:115px">488</div>
<div class="cl" style="left:114.5px;top:115px">            <span class="v">data</span>.valid = <span class="k">false</span>;</div>
<div class="ln" style="left:20px;top:136px">489</div>
<div class="cl" style="left:114.5px;top:136px"></div>
<div class="ln" style="left:20px;top:157px">490</div>
<div class="cl" style="left:114.5px;top:157px">            <span class="ty">Hashtable</span> <span class="v" style="background:#E4E8DE;outline:1px solid #BFC7B8;outline-offset:-1px">ht</span> = <span class="k">new</span> <span class="ty">Hashtable</span>();</div>
<div class="ln" style="left:20px;top:178px">491</div>
<div class="cl" style="left:114.5px;top:178px">            <span class="v" style="background:#E4E8DE">ht</span>.<span class="m">Add</span>(<span class="s">&quot;@modeSql&quot;</span>, <span class="s">&quot;ListProducts&quot;</span>);</div>
<div class="ln" style="left:20px;top:200px">492</div>
<div class="cl" style="left:114.5px;top:200px">            <span style="background:#FFEF63;outline:2px solid #3A3AF0;outline-offset:-1px;padding:0;display:inline-block;height:21px"><span class="v" style="background:#E4E8DE">ht</span>.Add("@userId", CustomIdentity.User().recordId);</span></div>
<div class="ln" style="left:20px;top:221px">493</div>
<div class="cl" style="left:114.5px;top:221px"></div>
<div class="ln" style="left:20px;top:242px">494</div>
<div class="cl" style="left:114.5px;top:242px">            <span class="ty">DataTable</span> <span class="v">dtProduct</span> = <span class="ty">DBHandler</span>.<span class="m">GetDataTable</span>(<span class="ty">ClsUtility</span>.salesConn, <span class="s">&quot;P_Product&quot;</span>, <span class="k">ref</span> <span class="v" style="background:#E4E8DE">ht</span>, <span class="s">&quot;</span><span class="s" style="background:#F6B94D">MapSalesProduct</span><span class="s">&quot;</span>);</div>
<div class="ln" style="left:20px;top:263px">495</div>
<div class="cl" style="left:114.5px;top:263px">            <span class="c">if</span> (<span class="v">dtProduct</span> != <span class="k">null</span> &amp;&amp; <span class="v">dtProduct</span>.Rows.Count &gt; 0)</div>
<div class="ln" style="left:20px;top:285px">496</div>
<div class="cl" style="left:114.5px;top:285px">            {</div>
<div class="ln" style="left:20px;top:306px">497</div>
<div class="cl" style="left:114.5px;top:306px">                <span style="color:#808080;outline:1px solid #A5A5A5;outline-offset:-1px;display:inline-block;height:20px;line-height:20px">Defind DT</span></div>
<div class="ln" style="left:20px;top:327px">509</div>
<div class="cl" style="left:114.5px;top:327px">                <span class="c">foreach</span> (<span class="ty">DataRow</span> <span class="v">dr</span> <span class="c">in</span> <span class="v">dtProduct</span>.Rows)</div>
<div class="ln" style="left:20px;top:349px">510</div>
<div class="cl" style="left:114.5px;top:349px">                {</div>
<div class="ln" style="left:20px;top:370px">511</div>
<div class="cl" style="left:114.5px;top:370px">                    <span class="ty">DataRow</span> <span class="v">row</span> = <span class="v">dt</span>.<span class="m">NewRow</span>();</div>
<div class="ln" style="left:20px;top:391px">512</div>
<div class="cl" style="left:114.5px;top:391px">                    <span class="v">row</span>[<span class="s">&quot;recordId&quot;</span>] = <span class="v">dr</span>[<span class="s">&quot;recordId&quot;</span>].<span class="m">ToString</span>();</div>
<div class="ln" style="left:20px;top:412px">513</div>
<div class="cl" style="left:114.5px;top:412px">                    <span class="v">row</span>[<span class="s">&quot;title&quot;</span>] = <span class="v">dr</span>[<span class="s">&quot;productName&quot;</span>].<span class="m">ToString</span>();</div>
<div class="ln" style="left:20px;top:434px">514</div>
<div class="cl" style="left:114.5px;top:434px">                    <span class="v">row</span>[<span class="s">&quot;productCode&quot;</span>] = <span class="v">dr</span>[<span class="s">&quot;productCode&quot;</span>].<span class="m">ToString</span>();</div>
<div class="ln" style="left:20px;top:455px">515</div>
<div class="cl" style="left:114.5px;top:455px">                    <span class="v">row</span>[<span class="s">&quot;serialWise&quot;</span>] = <span class="ty">ClsUtility</span>.<span class="m">GetInteger</span>(<span class="v">dr</span>[<span class="s">&quot;serial&quot;</span>].<span class="m">ToString</span>());</div>
<div class="ln" style="left:20px;top:476px">516</div>
<div class="cl" style="left:114.5px;top:476px">                    <span class="v">row</span>[<span class="s">&quot;warrantyPeriod&quot;</span>] = <span class="ty">ClsUtility</span>.<span class="m">GetInteger</span>(<span class="v">dr</span>[<span class="s">&quot;warranty&quot;</span>].<span class="m">ToString</span>());</div>
<div class="ln" style="left:20px;top:497px">517</div>
<div class="cl" style="left:114.5px;top:497px">                    <span class="v">row</span>[<span class="s">&quot;description&quot;</span>] = <span class="v">dr</span>[<span class="s">&quot;description&quot;</span>].<span class="m">ToString</span>();</div>
<div class="ln" style="left:20px;top:519px">518</div>
<div class="cl" style="left:114.5px;top:519px">                    <span class="v">row</span>[<span class="s">&quot;disable&quot;</span>] = <span class="ty">ClsUtility</span>.<span class="m">GetInteger</span>(<span class="v">dr</span>[<span class="s">&quot;disable&quot;</span>].<span class="m">ToString</span>());</div>
<div class="ln" style="left:20px;top:540px">519</div>
<div class="cl" style="left:114.5px;top:540px">                    <span class="v">row</span>[<span class="s">&quot;groupId&quot;</span>] = <span class="v">dr</span>[<span class="s">&quot;groupId&quot;</span>].<span class="m">ToString</span>();</div>
<svg style="left:101px;top:34px" width="11" height="11" viewBox="0 0 11 11"><rect x="0.5" y="0.5" width="10" height="10" fill="#fff" stroke="#A5A5A5"/><rect x="2.5" y="4.75" width="6" height="1.3" fill="#424242"/></svg>
<svg style="left:101px;top:268px" width="11" height="11" viewBox="0 0 11 11"><rect x="0.5" y="0.5" width="10" height="10" fill="#fff" stroke="#A5A5A5"/><rect x="2.5" y="4.75" width="6" height="1.3" fill="#424242"/></svg>
<svg style="left:101px;top:310px" width="11" height="11" viewBox="0 0 11 11"><rect x="0.5" y="0.5" width="10" height="10" fill="#E6E6E6" stroke="#A5A5A5"/><rect x="2.5" y="4.75" width="6" height="1.3" fill="#424242"/><rect x="4.85" y="2.4" width="1.3" height="6" fill="#424242"/></svg>
<svg style="left:101px;top:331px" width="11" height="11" viewBox="0 0 11 11"><rect x="0.5" y="0.5" width="10" height="10" fill="#fff" stroke="#A5A5A5"/><rect x="2.5" y="4.75" width="6" height="1.3" fill="#424242"/></svg>
<svg style="left:2px;top:200px" width="19" height="19" viewBox="0 0 19 19"><circle cx="8.5" cy="8.5" r="8.2" fill="#E51400"/><path d="M2.5 6 H7.5 V2.8 L13.8 8.5 L7.5 14.2 V11 H2.5 Z" fill="#FFCC00" stroke="#5A3A00" stroke-width="0.9"/><path d="M13.5 9 L18 13.5 L13.5 18 L9 13.5 Z" fill="#00539C" stroke="#fff" stroke-width="0.9"/><rect x="13" y="11.3" width="1" height="3.5" fill="#BFD6EA"/></svg>
<div class="t" style="left:684px;top:204px;font-size:12px;color:#9A9A9A">&le; 14,86,679ms elapsed</div>
<svg style="left:270px;top:374px" width="13" height="11" viewBox="0 0 13 11"><path d="M0 0 L8.5 5.5 L0 11 Z" fill="#6DB26D"/><rect x="10" y="0" width="1.6" height="11" fill="#6DB26D"/></svg>
<svg style="left:330.5px;top:90px" width="14" height="3"><rect x="1" y="0" width="1.5" height="1.5" fill="#9A9A9A"/><rect x="5.5" y="0" width="1.5" height="1.5" fill="#9A9A9A"/><rect x="10" y="0" width="1.5" height="1.5" fill="#9A9A9A"/></svg>
<svg style="left:357.5px;top:175px" width="14" height="3"><rect x="1" y="0" width="1.5" height="1.5" fill="#9A9A9A"/><rect x="5.5" y="0" width="1.5" height="1.5" fill="#9A9A9A"/><rect x="10" y="0" width="1.5" height="1.5" fill="#9A9A9A"/></svg>
</div>
<div class="a" style="left:1114px;top:172px;width:350px;height:68px;background:#EEEEF2"></div>
<div class="a" style="left:1114px;top:240px;width:350px;height:5px;background:#CCCEDB"></div>
<svg style="left:1122px;top:187px" width="11" height="8" viewBox="0 0 11 8"><path d="M1 1.5 L5.5 6 L10 1.5" fill="none" stroke="#717171" stroke-width="2"/></svg>
<div class="a" style="left:1142px;top:177px;width:246px;height:28px;background:#fff"></div>
<div class="t" style="left:1149px;top:184px;font-size:14.6px;color:#1E1E1E">MapSalesProduct</div>
<svg style="left:1356px;top:186px" width="10" height="10" viewBox="0 0 10 10"><path d="M0.8 0.8 L9.2 9.2 M9.2 0.8 L0.8 9.2" stroke="#1E74C6" stroke-width="1.9"/></svg>
<svg style="left:1377px;top:189px" width="7" height="4"><path d="M0 0 H7 L3.5 4 Z" fill="#717171"/></svg>
<svg style="left:1397px;top:185px" width="14" height="12" viewBox="0 0 14 12"><path d="M0.5 6 H12 M7 1 L12.2 6 L7 11" fill="none" stroke="#1E1E1E" stroke-width="2.2"/></svg>
<svg style="left:1422px;top:189px" width="7" height="4"><path d="M0 0 H7 L3.5 4 Z" fill="#717171"/></svg>
<svg style="left:1443px;top:185px" width="13" height="12" viewBox="0 0 13 12"><path d="M0.8 0.8 L12.2 11.2 M12.2 0.8 L0.8 11.2" stroke="#717171" stroke-width="1.6"/></svg>
<div class="t" style="left:1145px;top:215px;font-size:16px;color:#424242">A<span style="font-size:12px">a</span></div>
<svg style="left:1176px;top:215px" width="17" height="14" viewBox="0 0 17 14"><rect x="0" y="0" width="17" height="1.2" fill="#424242"/><rect x="0" y="12.8" width="17" height="1.2" fill="#424242"/><text x="0.5" y="11" font-size="11" font-family="Liberation Sans" fill="#424242">Ab</text><rect x="14" y="3" width="1.3" height="8" fill="#424242"/></svg>
<svg style="left:1206px;top:215px" width="16" height="14" viewBox="0 0 16 14"><rect x="0.5" y="8.5" width="4.5" height="4.5" fill="#424242"/><path d="M10.5 0.5 V10 M6.3 3 L14.7 7.5 M14.7 3 L6.3 7.5" stroke="#424242" stroke-width="1.8"/></svg>
<div class="t" style="left:1233px;top:216px;font-size:14.8px;color:#717171">Current Document</div>
<svg style="left:1423px;top:221px" width="8" height="4"><path d="M0 0 H8 L4 4 Z" fill="#717171"/></svg>
<svg style="left:1116px;top:228px" width="11" height="10"><g fill="#9A9AA2"><rect x="0.5" y="0" width="1" height="1"/><rect x="0.5" y="4" width="1" height="1"/><rect x="4.5" y="4" width="1" height="1"/><rect x="0.5" y="8" width="1" height="1"/><rect x="4.5" y="8" width="1" height="1"/><rect x="8.5" y="8" width="1" height="1"/></g></svg>
<!-- ===== DIAGNOSTIC TOOLS ===== -->
<div class="a" style="left:1497px;top:118px;width:384px;height:627px;background:#EEEEF2;border:1px solid #CCCEDB"></div>
<div class="t" style="left:1502px;top:125px;font-size:15.1px;color:#1E1E1E">Diagnostic Tools</div>
<svg style="left:1622px;top:129px" width="187" height="6"><defs><pattern id="gp1622129" x="0" y="0" width="5" height="6" patternUnits="userSpaceOnUse"><rect x="0" y="0" width="1" height="1" fill="#8E8E94"/><rect x="0" y="5" width="1" height="1" fill="#8E8E94"/><rect x="2.5" y="2.5" width="1" height="1" fill="#A4A4AA"/></pattern></defs><rect x="0" y="0" width="187" height="6" fill="url(#gp1622129)"/></svg>
<svg style="left:1818px;top:129px" width="10" height="6"><path d="M0 0 H10 L5 6 Z" fill="#1E1E1E"/></svg>
<svg style="left:1839px;top:124px" width="10" height="15" viewBox="0 0 10 15"><rect x="1" y="1" width="7" height="8" fill="#1E1E1E"/><rect x="2.8" y="2.2" width="1.8" height="6" fill="#EEEEF2"/><rect x="0" y="8.6" width="9.4" height="1.5" fill="#1E1E1E"/><rect x="3.9" y="10" width="1.4" height="5" fill="#1E1E1E"/></svg>
<svg style="left:1859px;top:127px" width="12" height="11" viewBox="0 0 12 11"><path d="M0.8 0.6 L11.2 10.4 M11.2 0.6 L0.8 10.4" stroke="#1E1E1E" stroke-width="1.7"/></svg>
<svg style="left:1511px;top:153px" width="18" height="18" viewBox="0 0 18 18"><g fill="#424242"><circle cx="9" cy="9" r="6"/><rect x="7.3" y="0.3" width="3.4" height="17.4"/><rect x="0.3" y="7.3" width="17.4" height="3.4"/><rect x="7.3" y="0.3" width="3.4" height="17.4" transform="rotate(45 9 9)"/><rect x="7.3" y="0.3" width="3.4" height="17.4" transform="rotate(-45 9 9)"/></g><circle cx="9" cy="9" r="2.6" fill="#EEEEF2"/></svg>
<div class="a" style="left:1543px;top:149px;width:1px;height:27px;background:#CCCEDB"></div>
<svg style="left:1554px;top:153px" width="19" height="18" viewBox="0 0 19 18"><path d="M13.5 1 H1 V17 H13.5" fill="none" stroke="#424242" stroke-width="1.5"/><path d="M5 9 H16 M11.5 4.5 L16 9 L11.5 13.5" fill="none" stroke="#00539C" stroke-width="2.3"/></svg>
<div class="a" style="left:1585px;top:149px;width:1px;height:27px;background:#CCCEDB"></div>
<svg style="left:1596px;top:153px" width="18" height="18" viewBox="0 0 18 18"><circle cx="6.5" cy="6.5" r="5.6" fill="none" stroke="#424242" stroke-width="1.4"/><path d="M4 6 H9 M6.5 3.5 V8.5" stroke="#00539C" stroke-width="1.4"/><path d="M10.5 10.5 L16.5 16.5" stroke="#424242" stroke-width="2.6"/></svg>
<svg style="left:1628px;top:153px" width="18" height="18" viewBox="0 0 18 18"><circle cx="6.5" cy="6.5" r="5.6" fill="none" stroke="#424242" stroke-width="1.4"/><path d="M4 6.5 H9" stroke="#00539C" stroke-width="1.4"/><path d="M10.5 10.5 L16.5 16.5" stroke="#424242" stroke-width="2.6"/></svg>
<svg style="left:1658px;top:153px" width="18" height="18" viewBox="0 0 18 18"><path d="M1.5 3.5 C2 0.5 6.5 0.5 6.5 3.5 C6.5 6 4 6 4 8" fill="none" stroke="#00539C" stroke-width="1.4"/><path d="M0 2 L1.5 5 L3.5 2.5 Z" fill="#00539C"/><g fill="#424242"><rect x="2.5" y="11" width="2.5" height="7"/><rect x="6.5" y="9" width="2.5" height="9"/><rect x="10.5" y="5" width="2.5" height="13"/><rect x="14.5" y="10" width="2.5" height="8"/></g></svg>
<div class="a" style="left:1498px;top:180px;width:361px;height:323px;background:#F5F5F5"></div>
<div class="a" style="left:1859px;top:146px;width:21px;height:357px;background:#F5F5F5"></div>
<svg style="left:1861px;top:159px" width="16" height="14" viewBox="0 0 16 14"><path d="M0.5 12 L8 3 L15.5 12" fill="none" stroke="#868999" stroke-width="3.2"/></svg>
<div class="a" style="left:1860px;top:180px;width:19px;height:257px;background:#C2C3C9"></div>
<svg style="left:1861px;top:473px" width="16" height="14" viewBox="0 0 16 14"><path d="M0.5 2 L8 11 L15.5 2" fill="none" stroke="#868999" stroke-width="3.2"/></svg>
<div class="t" style="left:1511px;top:186px;font-size:14.8px;color:#1E1E1E">Diagnostics session: 26:18 minutes</div>
<div class="a" style="left:1498px;top:206px;width:361px;height:1px;background:#D3D5DF"></div>
<div class="a" style="left:1498px;top:233px;width:361px;height:2px;background:#D3D5DF"></div>
<div class="a" style="left:1600px;top:207px;width:1px;height:27px;background:#D3D5DF"></div>
<div class="a" style="left:1756px;top:207px;width:1px;height:27px;background:#D3D5DF"></div>
<div class="a" style="left:1569px;top:229px;width:1px;height:5px;background:#D3D5DF"></div>
<div class="a" style="left:1631px;top:229px;width:1px;height:5px;background:#D3D5DF"></div>
<div class="a" style="left:1662px;top:229px;width:1px;height:5px;background:#D3D5DF"></div>
<div class="a" style="left:1693px;top:229px;width:1px;height:5px;background:#D3D5DF"></div>
<div class="a" style="left:1724px;top:229px;width:1px;height:5px;background:#D3D5DF"></div>
<div class="a" style="left:1787px;top:229px;width:1px;height:5px;background:#D3D5DF"></div>
<div class="t" style="left:1603px;top:211px;font-size:14.3px;color:#424242">26:10min</div>
<div class="a" style="left:1758px;top:207px;width:54px;height:26px;overflow:hidden"><div class="t" style="left:0;top:4px;font-size:14.3px;color:#424242">26:20min</div></div>
<div class="a" style="left:1538px;top:207px;width:6px;height:27px;background:#1E1E1E"></div>
<div class="a" style="left:1812px;top:207px;width:7px;height:27px;background:#1E1E1E"></div>
<svg style="left:1505px;top:244px" width="10" height="10"><path d="M9 0.5 V9 H0.5 Z" fill="#424242"/></svg>
<div class="t" style="left:1520px;top:242px;font-size:15px">Events</div>
<div class="a" style="left:1543px;top:261px;width:271px;height:29px;border:1px solid #D3D5DF"></div>
<div class="a" style="left:1600px;top:262px;width:1px;height:27px;background:#D3D5DF"></div>
<div class="a" style="left:1756px;top:262px;width:1px;height:27px;background:#D3D5DF"></div>
<div class="a" style="left:1544px;top:268px;width:189px;height:17px;background:#717171"></div>
<svg style="left:1521px;top:268px" width="12" height="12"><rect x="0.5" y="0" width="3.5" height="12" fill="#424242"/><rect x="7" y="0" width="3.5" height="12" fill="#424242"/></svg>
<svg style="left:1505px;top:300px" width="10" height="10"><path d="M9 0.5 V9 H0.5 Z" fill="#424242"/></svg>
<div class="t" style="left:1520px;top:298px;font-size:15.08px">Process Memory (MB)</div>
<svg style="left:1709px;top:297px" width="15" height="13"><path d="M0 0 H15 L7.5 13 Z" fill="#1B7AD6"/></svg>
<div class="a" style="left:1737px;top:297px;width:15px;height:15px;border-radius:50%;background:#79AECB"></div>
<div class="t" style="left:1755px;top:298px;font-size:14.5px">P..</div>
<div class="a" style="left:1543px;top:321px;width:271px;height:86px;border:1px solid #D3D5DF"></div>
<div class="a" style="left:1544px;top:329px;width:190px;height:77px;background:#A5C6DA"></div>
<div class="a" style="left:1600px;top:322px;width:1px;height:84px;background:#D3D5DF;opacity:0.7"></div>
<div class="a" style="left:1756px;top:322px;width:1px;height:84px;background:#D3D5DF"></div>
<div class="t" style="left:1512px;top:325px;font-size:14.5px">227</div>
<div class="t" style="left:1528px;top:391px;font-size:14.5px">0</div>
<div class="t" style="left:1820px;top:325px;font-size:14.5px">227</div>
<div class="t" style="left:1820px;top:391px;font-size:14.5px">0</div>
<svg style="left:1505px;top:416px" width="10" height="10"><path d="M9 0.5 V9 H0.5 Z" fill="#424242"/></svg>
<div class="t" style="left:1520px;top:414px;font-size:14.66px">CPU (% of all processors)</div>
<div class="a" style="left:1543px;top:432px;width:271px;height:72px;border:1px solid #D3D5DF;border-bottom:none"></div>
<div class="a" style="left:1600px;top:433px;width:1px;height:70px;background:#D3D5DF"></div>
<div class="a" style="left:1756px;top:433px;width:1px;height:70px;background:#D3D5DF"></div>
<div class="t" style="left:1513px;top:436px;font-size:14.5px">100</div>
<div class="t" style="left:1820px;top:436px;font-size:14.5px">100</div>
<div class="a" style="left:1498px;top:502px;width:382px;height:4px;background:#D3D5DF"></div>
<div class="a" style="left:1498px;top:506px;width:382px;height:238px;background:#F5F5F5"></div>
<div class="a" style="left:1503px;top:511px;width:76px;height:24px;background:#E6E7ED"></div>
<div class="t" style="left:1510px;top:517px;font-size:14.7px">Summary</div>
<div class="t" style="left:1586px;top:517px;font-size:13.8px">Events</div>
<div class="t" style="left:1642px;top:517px;font-size:14.67px">Memory Usage</div>
<div class="t" style="left:1756px;top:517px;font-size:13.6px">CPU Usage</div>
<div class="a" style="left:1498px;top:537px;width:382px;height:1px;background:#D3D5DF"></div>
<div class="a" style="left:1498px;top:566px;width:382px;height:1px;background:#D3D5DF"></div>
<div class="a" style="left:1498px;top:602px;width:382px;height:1px;background:#D3D5DF"></div>
<div class="a" style="left:1498px;top:631px;width:382px;height:1px;background:#D3D5DF"></div>
<div class="a" style="left:1498px;top:667px;width:382px;height:1px;background:#D3D5DF"></div>
<div class="a" style="left:1498px;top:696px;width:382px;height:1px;background:#D3D5DF"></div>
<div class="t" style="left:1510px;top:546px;font-size:13.6px;font-weight:bold">Events</div>
<svg style="left:1518px;top:581px" width="15" height="7" viewBox="0 0 15 7"><g fill="none" stroke="#424242" stroke-width="1"><path d="M0.5 3.5 L3 1 L5.5 3.5 L3 6 Z"/><path d="M6.5 1 L9 3.5 L6.5 6"/><path d="M10.5 1 L13 3.5 L10.5 6"/></g></svg>
<div class="t" style="left:1543px;top:578px;font-size:14.44px">Show Events (3 of 3)</div>
<div class="t" style="left:1510px;top:611px;font-size:14.34px;font-weight:bold">Memory Usage</div>
<svg style="left:1518px;top:644px" width="15" height="12" viewBox="0 0 15 12"><path d="M0 2 H4 L5 0 H10 L11 2 H15 V12 H0 Z" fill="#424242"/><circle cx="7.5" cy="6.8" r="3" fill="#F5F5F5"/><circle cx="7.5" cy="6.8" r="1.6" fill="#424242"/></svg>
<div class="t" style="left:1543px;top:643px;font-size:14.52px">Take Snapshot</div>
<div class="t" style="left:1510px;top:676px;font-size:13.8px;font-weight:bold">CPU Usage</div>
<div class="a" style="left:1520px;top:709px;width:10px;height:10px;border-radius:50%;background:#424242"></div>
<div class="t" style="left:1543px;top:707px;font-size:14.45px">Record CPU Profile</div>
<div class="a" style="left:1912px;top:118px;width:8px;height:114px;background:#C9CCDA"></div>
<div class="a" style="left:1912px;top:247px;width:8px;height:79px;background:#C9CCDA"></div>
<div class="t" style="left:1904px;top:118px;font-size:14.5px;transform-origin:0 0;transform:rotate(90deg)">Solution Explorer</div>
<div class="t" style="left:1904px;top:247px;font-size:14.5px;transform-origin:0 0;transform:rotate(90deg)">Git Changes</div>
<!-- ===== BOTTOM ===== -->
<div class="a" style="left:8px;top:753px;width:928px;height:216px;background:#F5F5F5;border:1px solid #CCCEDB"></div>
<div class="a" style="left:9px;top:754px;width:926px;height:58px;background:#EEEEF2"></div>
<div class="t" style="left:12px;top:759px;font-size:15px">Autos</div>
<svg style="left:60px;top:764px" width="803" height="6"><defs><pattern id="gp60764" x="0" y="0" width="5" height="6" patternUnits="userSpaceOnUse"><rect x="0" y="0" width="1" height="1" fill="#8E8E94"/><rect x="0" y="5" width="1" height="1" fill="#8E8E94"/><rect x="2.5" y="2.5" width="1" height="1" fill="#A4A4AA"/></pattern></defs><rect x="0" y="0" width="803" height="6" fill="url(#gp60764)"/></svg>
<svg style="left:873px;top:764px" width="10" height="6"><path d="M0 0 H10 L5 6 Z" fill="#1E1E1E"/></svg>
<svg style="left:893px;top:759px" width="10" height="15" viewBox="0 0 10 15"><rect x="1" y="1" width="7" height="8" fill="#1E1E1E"/><rect x="2.8" y="2.2" width="1.8" height="6" fill="#EEEEF2"/><rect x="0" y="8.6" width="9.4" height="1.5" fill="#1E1E1E"/><rect x="3.9" y="10" width="1.4" height="5" fill="#1E1E1E"/></svg>
<svg style="left:914px;top:762px" width="12" height="11" viewBox="0 0 12 11"><path d="M0.8 0.6 L11.2 10.4 M11.2 0.6 L0.8 10.4" stroke="#1E1E1E" stroke-width="1.7"/></svg>
<div class="a" style="left:9px;top:782px;width:281px;height:27px;background:#fff;border:1px solid #CCCEDB"></div>
<div class="t" style="left:15px;top:789px;font-size:14.5px;color:#6D6D6D">Search (Ctrl+E)</div>
<svg style="left:255px;top:787px" width="17" height="17" viewBox="0 0 18 18"><circle cx="11" cy="6.5" r="4.2" fill="none" stroke="#424242" stroke-width="2.2"/><path d="M8 9.5 L2.5 15" stroke="#424242" stroke-width="3"/></svg>
<svg style="left:278px;top:794px" width="7" height="4"><path d="M0 0 H7 L3.5 4 Z" fill="#717171"/></svg>
<svg style="left:300px;top:790px" width="18" height="14" viewBox="0 0 18 14"><path d="M17 7 H2 M7.5 1.5 L2 7 L7.5 12.5" fill="none" stroke="#C6C6C6" stroke-width="1.6"/></svg>
<svg style="left:326px;top:790px" width="18" height="14" viewBox="0 0 18 14"><path d="M1 7 H16 M10.5 1.5 L16 7 L10.5 12.5" fill="none" stroke="#C6C6C6" stroke-width="1.6"/></svg>
<div class="t" style="left:353px;top:791px;font-size:14.4px">Search Depth:</div>
<div class="a" style="left:453px;top:784px;width:50px;height:25px;background:#fff;border:1px solid #CCCEDB"></div>
<div class="t" style="left:458px;top:790px;font-size:14.5px">3</div>
<svg style="left:490px;top:795px" width="7" height="4"><path d="M0 0 H7 L3.5 4 Z" fill="#717171"/></svg>
<div class="a" style="left:511px;top:786px;width:1px;height:21px;background:#CCCEDB"></div>
<svg style="left:521px;top:787px" width="18" height="19" viewBox="0 0 18 19"><path d="M1.5 1 H6.5 M2.5 1 V7.5 H5.5 V1 M0.5 8 H7.5 M4 8 V18" fill="none" stroke="#424242" stroke-width="1.4"/><path d="M6.5 0.5 H17.5 L13.5 5 L12.5 11 L10.5 12 L10 5 Z" fill="#424242"/></svg>
<div class="a" style="left:544px;top:783px;width:28px;height:27px;border:1px solid #3399FF;background:#EEEEF2"></div>
<svg style="left:550px;top:787px" width="17" height="19" viewBox="0 0 17 19"><path d="M1.5 1 H5.5 M2.3 1 V6.5 H4.7 V1 M0.5 7 H6.5 M3.5 7 V18" fill="none" stroke="#424242" stroke-width="1.3"/><rect x="5.5" y="9" width="11" height="9" fill="none" stroke="#424242" stroke-width="1.2"/><text x="7" y="16.5" font-size="8" font-family="Liberation Sans" fill="#424242">ab</text></svg>
<div class="a" style="left:9px;top:813px;width:926px;height:24px;background:#F5F5F5"></div>
<div class="a" style="left:19px;top:813px;width:1px;height:24px;background:#E4E5EB"></div>
<div class="a" style="left:317px;top:813px;width:1px;height:67px;background:#E4E5EB"></div>
<div class="a" style="left:764px;top:813px;width:1px;height:67px;background:#E4E5EB"></div>
<div class="a" style="left:9px;top:837px;width:926px;height:1px;background:#E4E5EB"></div>
<div class="t" style="left:25px;top:819px;font-size:14.5px">Name</div>
<div class="t" style="left:323px;top:819px;font-size:14.5px">Value</div>
<div class="t" style="left:769px;top:819px;font-size:14.5px">Type</div>
<div class="a" style="left:41px;top:839px;width:276px;height:20px;background:#C9CCDA"></div>
<div class="a" style="left:318px;top:839px;width:446px;height:20px;background:#C9CCDA"></div>
<div class="a" style="left:765px;top:839px;width:148px;height:20px;background:#C9CCDA"></div>
<div class="a" style="left:20px;top:859px;width:893px;height:1px;background:#EAEBEF"></div>
<div class="a" style="left:20px;top:880px;width:893px;height:1px;background:#EAEBEF"></div>
<svg style="left:27px;top:845px" width="6" height="9"><path d="M0.7 0.7 L5 4.5 L0.7 8.3 Z" fill="none" stroke="#424242" stroke-width="1.2"/></svg>
<svg style="left:43px;top:843px" width="14" height="12" viewBox="0 0 14 12"><path d="M0.5 4 L7 1 L13.5 4 V8.5 L7 11.5 L0.5 8.5 Z" fill="#00539C"/><path d="M4 3.5 L7.5 2 L10.5 3.5 L7 5 Z" fill="#fff"/></svg>
<div class="t" style="left:66px;top:842px;font-size:15px">ht</div>
<div class="t" style="left:322px;top:842px;font-size:14.5px;color:#E51400">Count = 1</div>
<div class="t" style="left:769px;top:842px;font-size:14.06px">System.Collections....</div>
<svg style="left:27px;top:866px" width="6" height="9"><path d="M0.7 0.7 L5 4.5 L0.7 8.3 Z" fill="none" stroke="#424242" stroke-width="1.2"/></svg>
<svg style="left:43px;top:864px" width="14" height="12" viewBox="0 0 14 12"><path d="M0.5 4 L7 1 L13.5 4 V8.5 L7 11.5 L0.5 8.5 Z" fill="#00539C"/><path d="M4 3.5 L7.5 2 L10.5 3.5 L7 5 Z" fill="#fff"/></svg>
<div class="t" style="left:66px;top:863px;font-size:15px">this</div>
<div class="t" style="left:322px;top:863px;font-size:14.5px;color:#1E1E1E">{RMA.Services.wsProduct}</div>
<div class="t" style="left:769px;top:863px;font-size:14.06px">RMA.Services.wsPro...</div>
<div class="a" style="left:8px;top:968px;width:52px;height:25px;background:#F5F5F5;border:1px solid #CCCEDB;border-top:none"></div>
<div class="t" style="left:15px;top:974px;font-size:14.5px;color:#0E70C0">Autos</div>
<div class="t" style="left:67px;top:974px;font-size:14.5px;color:#1E1E1E">Locals</div>
<div class="t" style="left:122px;top:974px;font-size:14.5px;color:#1E1E1E">Watch 1</div>
<div class="a" style="left:944px;top:753px;width:937px;height:216px;background:#F5F5F5;border:1px solid #CCCEDB"></div>
<div class="a" style="left:945px;top:754px;width:935px;height:27px;background:#EEEEF2"></div>
<div class="t" style="left:949px;top:759px;font-size:15px">Call Stack</div>
<svg style="left:1023px;top:764px" width="784" height="6"><defs><pattern id="gp1023764" x="0" y="0" width="5" height="6" patternUnits="userSpaceOnUse"><rect x="0" y="0" width="1" height="1" fill="#8E8E94"/><rect x="0" y="5" width="1" height="1" fill="#8E8E94"/><rect x="2.5" y="2.5" width="1" height="1" fill="#A4A4AA"/></pattern></defs><rect x="0" y="0" width="784" height="6" fill="url(#gp1023764)"/></svg>
<svg style="left:1817px;top:764px" width="10" height="6"><path d="M0 0 H10 L5 6 Z" fill="#1E1E1E"/></svg>
<svg style="left:1837px;top:759px" width="10" height="15" viewBox="0 0 10 15"><rect x="1" y="1" width="7" height="8" fill="#1E1E1E"/><rect x="2.8" y="2.2" width="1.8" height="6" fill="#EEEEF2"/><rect x="0" y="8.6" width="9.4" height="1.5" fill="#1E1E1E"/><rect x="3.9" y="10" width="1.4" height="5" fill="#1E1E1E"/></svg>
<svg style="left:1858px;top:762px" width="12" height="11" viewBox="0 0 12 11"><path d="M0.8 0.6 L11.2 10.4 M11.2 0.6 L0.8 10.4" stroke="#1E1E1E" stroke-width="1.7"/></svg>
<div class="a" style="left:965px;top:781px;width:1px;height:24px;background:#E4E5EB"></div>
<div class="a" style="left:1820px;top:781px;width:1px;height:67px;background:#E4E5EB"></div>
<div class="a" style="left:945px;top:805px;width:912px;height:1px;background:#E4E5EB"></div>
<div class="t" style="left:971px;top:787px;font-size:14.5px">Name</div>
<div class="t" style="left:1826px;top:787px;font-size:14.5px">Lang</div>
<div class="a" style="left:945px;top:807px;width:20px;height:20px;background:#C9CCDA"></div>
<div class="a" style="left:966px;top:807px;width:854px;height:20px;background:#C9CCDA"></div>
<div class="a" style="left:1821px;top:807px;width:36px;height:20px;background:#C9CCDA"></div>
<div class="a" style="left:945px;top:848px;width:912px;height:1px;background:#EAEBEF"></div>
<svg style="left:946px;top:808px" width="18" height="18" viewBox="0 0 18 18"><circle cx="9" cy="9" r="8.3" fill="#D40F0F"/><circle cx="9" cy="9" r="6.8" fill="#5A1A10"/><path d="M3.2 6.5 H8.3 V3.3 L14.6 9 L8.3 14.7 V11.5 H3.2 Z" fill="#FFD21A" stroke="#2A1A00" stroke-width="1" stroke-linejoin="round"/></svg>
<div class="t" style="left:970px;top:811px;font-size:14.3px">RMA.dll!RMA.Services.wsProduct.MapSalesProduct() Line 492</div>
<div class="t" style="left:1825px;top:811px;font-size:14.5px">C#</div>
<div class="t" style="left:970px;top:832px;font-size:14.5px;color:#8A8A8A">[External Code]</div>
<div class="a" style="left:944px;top:968px;width:78px;height:25px;background:#F5F5F5;border:1px solid #CCCEDB;border-top:none"></div>
<div class="t" style="left:951px;top:974px;font-size:14.5px;color:#0E70C0">Call Stack</div>
<div class="t" style="left:1029px;top:974px;font-size:14.5px;color:#1E1E1E">Breakpoints</div>
<div class="t" style="left:1121px;top:974px;font-size:14.7px;color:#1E1E1E">Exception Settings</div>
<div class="t" style="left:1257px;top:974px;font-size:14.5px;color:#1E1E1E">Command Window</div>
<div class="t" style="left:1399px;top:974px;font-size:14.6px;color:#1E1E1E">Immediate Window</div>
<div class="t" style="left:1544px;top:974px;font-size:14.5px;color:#1E1E1E">Output</div>
<div class="a" style="left:0;top:1000px;width:1920px;height:30px;background:#CA5100"></div>
<svg style="left:5px;top:1008px" width="21" height="15" viewBox="0 0 21 15"><path d="M5 1 H20 L16.5 14 H1.5 Z" fill="none" stroke="#fff" stroke-width="1.3"/></svg>
<div class="t" style="left:35px;top:1008px;font-size:15px;color:#fff">Ready</div>
<svg style="left:1657px;top:1008px" width="13" height="15" viewBox="0 0 13 15"><path d="M6.5 15 V2 M1 7 L6.5 1.5 L12 7" fill="none" stroke="#DCDCDC" stroke-width="2"/></svg>
<div class="t" style="left:1681px;top:1008px;font-size:14.9px;color:#fff">Add to Source Control</div>
<svg style="left:1837px;top:1011px" width="10" height="6"><path d="M0 6 L5 0 L10 6 Z" fill="#fff"/></svg>
<svg style="left:1871px;top:1006px" width="16" height="17" viewBox="0 0 16 17"><path d="M8 0.5 C11.5 0.5 13 3 13 6.5 V11 L15 13.5 H1 L3 11 V6.5 C3 3 4.5 0.5 8 0.5 Z M6 14.5 C6 16 10 16 10 14.5" fill="#D7D7D7"/></svg>
<div class="a" style="left:1882px;top:1012px;width:14px;height:14px;border-radius:50%;background:#fff;border:1px solid #CA5100"></div>
<div class="t" style="left:1886px;top:1014px;font-size:11px;color:#1B5FAA">1</div>
<div class="a" style="left:0;top:1030px;width:1920px;height:50px;background:linear-gradient(to right,#223842 0%,#203540 40%,#1E2C42 75%,#1C2A42 100%)"></div>
<svg style="left:20px;top:1045px" width="21" height="21" viewBox="0 0 21 21"><path d="M0 3 L8.5 1.8 V9.8 H0 Z M9.8 1.6 L20.5 0 V9.8 H9.8 Z M0 11 H8.5 V19 L0 17.8 Z M9.8 11 H20.5 V20.8 L9.8 19.2 Z" fill="#fff"/></svg>
<div class="a" style="left:60px;top:1030px;width:430px;height:50px;background:#F2F2F2;border-bottom:1px solid #D0D0D0"></div>
<svg style="left:75px;top:1045px" width="21" height="21" viewBox="0 0 21 21"><circle cx="13" cy="8" r="6.5" fill="none" stroke="#1E1E1E" stroke-width="1.5"/><path d="M8.5 12.5 L1 20" stroke="#1E1E1E" stroke-width="1.6"/></svg>
<div class="t" style="left:110px;top:1047px;font-size:18.4px;color:#1E1E1E">Type here to search</div>
<div class="a" style="left:511px;top:1046px;width:18px;height:18px;border-radius:50%;border:2px solid #fff"></div>
<svg style="left:569px;top:1045px" width="22" height="20" viewBox="0 0 22 20"><path d="M0.75 0 V2.5 H14.25 V0 M0.75 20 V17.5 H14.25 V20" fill="none" stroke="#fff" stroke-width="1.4"/><rect x="0.75" y="5" width="13.5" height="10" fill="none" stroke="#fff" stroke-width="1.4"/><path d="M19 0 V20" stroke="#fff" stroke-width="1.4"/><rect x="17.5" y="7.5" width="3" height="3" fill="#fff"/></svg>
<svg style="left:629px;top:1040px" width="31" height="31" viewBox="0 0 31 31"><defs><linearGradient id="eg1" x1="0" y1="0" x2="1" y2="1"><stop offset="0" stop-color="#35C1F1"/><stop offset="0.6" stop-color="#2FA7E0"/><stop offset="1" stop-color="#66EB6E"/></linearGradient><linearGradient id="eg2" x1="0" y1="0" x2="0" y2="1"><stop offset="0" stop-color="#0C59A4"/><stop offset="1" stop-color="#114A8B"/></linearGradient></defs><path d="M15.5 0.5 C24 0.5 30.5 6.5 30.5 14 C30.5 19 26.5 22 22 22 C18 22 15 20 15 17.5 C15 16 16 15.5 16.5 14.5 C14 10.5 8 11 5 15 C3 18 3 23 5.5 26.5 C2.5 24 0.5 20 0.5 15.5 C0.5 7 7 0.5 15.5 0.5 Z" fill="url(#eg1)"/><path d="M5 15 C8 11 14 10.5 16.5 14.5 C16 15.5 15 16 15 17.5 C15 20 18 22 22 22 C24 22 26 21.5 27.5 20.5 C25.5 26.5 20.5 30.5 15 30.5 C10 30.5 6 28 4.5 25 C2.5 21.5 3 18 5 15 Z" fill="url(#eg2)"/></svg>
<svg style="left:691px;top:1042px" width="30" height="24" viewBox="0 0 30 24"><path d="M0.5 2 Q0.5 0.5 2 0.5 H9 L11 2.5 H28 Q29.5 2.5 29.5 4 V22.5 Q29.5 23.5 28.5 23.5 H1.5 Q0.5 23.5 0.5 22.5 Z" fill="#FFC83D"/><path d="M0.5 5 H29.5" stroke="#E8A200" stroke-width="1.5"/><path d="M9 24 V15 Q9 13 11 13 H19 Q21 13 21 15 V24 H17.5 V17 H12.5 V24 Z" fill="#3A96DD"/></svg>
<svg style="left:753px;top:1040px" width="30" height="30" viewBox="0 0 30 30"><path d="M6 0.5 L29.5 6 L24 29.5 L0.5 24 Z" fill="#C8CCD0"/><path d="M6 0.5 L29.5 6 L24 29.5 Z" fill="#E2E4E6" opacity="0.6"/><path d="M13.5 11.5 L18.5 12.7 L17.3 17.7 L12.3 16.5 Z" fill="#2A2F33"/></svg>
<svg style="left:816px;top:1041px" width="32" height="32" viewBox="0 0 32 32"><circle cx="14" cy="14" r="13.5" fill="#DB4437"/><path d="M14 14 L2.3 20.75 A13.5 13.5 0 0 0 20.75 25.7 Z" fill="#0F9D58"/><path d="M14 14 L20.75 25.7 A13.5 13.5 0 0 0 27.5 14 L27.5 14 Z" fill="#FFCD40"/><path d="M14 14 L27.5 14 A13.5 13.5 0 0 0 25.7 7.25 Z" fill="#FFCD40"/><circle cx="14" cy="14" r="6" fill="#fff"/><circle cx="14" cy="14" r="4.8" fill="#4285F4"/><circle cx="23" cy="23" r="8.5" fill="#2B3A2E"/><circle cx="23" cy="21.5" r="4" fill="#A88B6A"/></svg>
<svg style="left:877px;top:1041px" width="29" height="28" viewBox="0 0 29 28"><path d="M6 2 L25 1 L28 26 L6 27 Z" fill="#E9E9E9"/><path d="M1 4 L21 2 L25 25 L5 27 Z" fill="#7ECDE0"/><path d="M1 4 L21 2 L25 25 L5 27 Z" fill="url(#np)" opacity="0.5"/><defs><linearGradient id="np" x1="0" y1="0" x2="1" y2="1"><stop offset="0" stop-color="#fff"/><stop offset="1" stop-color="#3A8FB0"/></linearGradient></defs><path d="M3 3 L21 1.5" stroke="#6A6A6A" stroke-width="1.5" stroke-dasharray="1.5 1.5"/></svg>
<svg style="left:942px;top:1041px" width="26" height="28" viewBox="0 0 26 28"><rect x="1" y="0.5" width="24" height="27" fill="#DDE6F0"/><rect x="1" y="0.5" width="24" height="2" fill="#8AA8C8"/><rect x="1" y="25.5" width="24" height="2" fill="#8AA8C8"/><text x="3" y="15" font-size="14" font-family="Liberation Serif" fill="#F08A24">A</text><rect x="13" y="8" width="9" height="1.2" fill="#5A88C0"/><rect x="13" y="11" width="9" height="1.2" fill="#5A88C0"/><rect x="4" y="18" width="18" height="1" fill="#A8B8C8"/><rect x="4" y="21" width="18" height="1" fill="#A8B8C8"/></svg>
<svg style="left:1001px;top:1041px" width="30" height="28" viewBox="0 0 30 28"><rect x="7" y="0.5" width="22.5" height="27" rx="1.5" fill="#2B7CD3"/><rect x="7" y="7" width="22.5" height="7" fill="#185ABD"/><rect x="7" y="14" width="22.5" height="7" fill="#103F91"/><rect x="7" y="0.5" width="22.5" height="6.5" fill="#41A5EE"/><rect x="0.5" y="7" width="15" height="14" rx="1" fill="#185ABD"/><text x="2.5" y="18.5" font-size="11" font-weight="bold" font-family="Liberation Sans" fill="#fff">W</text></svg>
<svg style="left:1063px;top:1041px" width="30" height="30" viewBox="0 0 30 30"><path d="M1 4 C1 0.5 14 0.5 14 4 V17 C14 20 1 20 1 17 Z" fill="#FFD54A"/><ellipse cx="7.5" cy="4" rx="6.5" ry="3" fill="#F0B400"/><path d="M20 1 H28 V8 M1 22 V29 H8" fill="none" stroke="#3FAE49" stroke-width="2"/><path d="M11 27 L25 13 M12 13 L26 27" stroke="#2B7CD3" stroke-width="2.4"/></svg>
<div class="a" style="left:1110px;top:1030px;width:61px;height:50px;background:#45535E"></div>
<svg style="left:1124px;top:1040px" width="31" height="31" viewBox="0 0 24 24"><path d="M17.3 0.3 L23.7 3 V21 L17.3 23.7 L7 14.6 L2.6 18 L0.3 16.8 V7.2 L2.6 6 L7 9.4 Z M17.3 6.2 L11 12 L17.3 17.8 Z M3 9 V15 L6 12 Z" fill="#9B6CE0" fill-rule="evenodd"/><path d="M17.3 0.3 L23.7 3 V21 L17.3 23.7 Z" fill="#B88BF2"/></svg>
<div class="a" style="left:619px;top:1077px;width:40px;height:3px;background:#76B9ED"></div>
<div class="a" style="left:681px;top:1077px;width:51px;height:3px;background:#76B9ED"></div>
<div class="a" style="left:805px;top:1077px;width:51px;height:3px;background:#76B9ED"></div>
<div class="a" style="left:867px;top:1077px;width:51px;height:3px;background:#76B9ED"></div>
<div class="a" style="left:929px;top:1077px;width:51px;height:3px;background:#76B9ED"></div>
<div class="a" style="left:991px;top:1077px;width:41px;height:3px;background:#76B9ED"></div>
<div class="a" style="left:1053px;top:1077px;width:51px;height:3px;background:#76B9ED"></div>
<div class="a" style="left:1110px;top:1077px;width:61px;height:3px;background:#76B9ED"></div>
<div class="a" style="left:660px;top:1077px;width:10px;height:3px;background:#4F7FA8"></div>
<div class="a" style="left:1033px;top:1077px;width:9px;height:3px;background:#4F7FA8"></div>
<svg style="left:1367px;top:1043px" width="30" height="24" viewBox="0 0 30 24"><path d="M14 0 C22 2 24 12 18 17 C13 21 6 20 1 16 C8 17 14 14 15 8 C15.5 5 15 2 14 0 Z" fill="#FFC61A"/><ellipse cx="13" cy="18" rx="10" ry="3.5" fill="#D6C6A8"/><ellipse cx="20" cy="19" rx="9" ry="2.8" fill="#B9AFA0"/><ellipse cx="12" cy="21.5" rx="11" ry="2" fill="#E6D8BC"/></svg>
<div class="t" style="left:1406px;top:1048px;font-size:17px;color:#fff">32°C&nbsp; Haze</div>
<svg style="left:1514px;top:1050px" width="17" height="10" viewBox="0 0 17 10"><path d="M0.7 9.3 L8.5 1.5 L16.3 9.3" fill="none" stroke="#fff" stroke-width="1.3"/></svg>
<svg style="left:1545px;top:1046px" width="16" height="19" viewBox="0 0 16 19"><rect x="1" y="5.5" width="9" height="8" rx="1" fill="none" stroke="#fff" stroke-width="1.2"/><path d="M10 8.5 L14.5 6 V13 L10 10.5" fill="none" stroke="#fff" stroke-width="1.2"/><path d="M2 3 C5 0.5 9 0.5 12 3 M2 16 C5 18.5 9 18.5 12 16" fill="none" stroke="#fff" stroke-width="1.1"/></svg>
<svg style="left:1573px;top:1050px" width="20" height="12" viewBox="0 0 20 12"><rect x="0.6" y="0.6" width="17" height="10.8" fill="none" stroke="#fff" stroke-width="1.2"/><rect x="2.5" y="2.5" width="10" height="7" fill="#fff"/><rect x="18" y="4" width="1.8" height="4" fill="#fff"/></svg>
<svg style="left:1602px;top:1048px" width="21" height="14" viewBox="0 0 21 14"><path d="M5 13.5 C1 13.5 0.5 8.5 4 7.5 C4.5 3 9.5 1 12.5 4 C15 1.5 19.5 3.5 18.5 7.5 C21.5 8.5 20.5 13.5 17.5 13.5 Z" fill="#E8E8E8"/><path d="M4 7.5 C4.5 3 9.5 1 12.5 4 C10 4.5 8.5 6 8 8 C6 7.5 5 7.5 4 7.5 Z" fill="#B8BEC6"/></svg>
<svg style="left:1632px;top:1045px" width="21" height="20" viewBox="0 0 21 20"><path d="M1 4 L19 1 V16 L1 17 Z" fill="none" stroke="#fff" stroke-width="1.2"/><path d="M7 8 C8 6 11 6 12 8 M12 11 C11 13 8 13 7 11" fill="none" stroke="#fff" stroke-width="1.1"/><circle cx="16" cy="16.5" r="3.3" fill="#2D7DD2"/></svg>
<svg style="left:1662px;top:1046px" width="21" height="19" viewBox="0 0 21 19"><path d="M1 6.5 H4.5 L9 2 V17 L4.5 12.5 H1 Z" fill="none" stroke="#fff" stroke-width="1.2"/><path d="M12 7 C13 8.5 13 10.5 12 12 M14.5 4.5 C16.5 7.5 16.5 11.5 14.5 14.5 M17 2 C20.5 6.5 20.5 12.5 17 17" fill="none" stroke="#fff" stroke-width="1.2"/></svg>
<svg style="left:1695px;top:1048px" width="17" height="16" viewBox="0 0 17 16"><path d="M1 15 C1 7 7 1 15.5 1 M4 15 C4 9 9 4 15.5 4 M7.5 15 C7.5 11 11 7.5 15.5 7.5" fill="none" stroke="#fff" stroke-width="1.1"/><circle cx="13.5" cy="13.5" r="1.5" fill="#fff"/></svg>
<div class="t" style="left:1725px;top:1049px;font-size:15px;color:#fff">ENG</div>
<div class="t" style="left:1790px;top:1037px;font-size:15px;color:#fff">23:52</div>
<div class="t" style="left:1771px;top:1060px;font-size:14.7px;color:#fff">19-04-2022</div>
<svg style="left:1869px;top:1045px" width="21" height="19" viewBox="0 0 21 19"><path d="M0.5 0.5 H20.5 V15 H9 L5.5 18.5 V15 H0.5 Z" fill="#fff"/><rect x="4" y="4" width="13" height="1.3" fill="#1E2C42"/><rect x="4" y="7" width="13" height="1.3" fill="#1E2C42"/><rect x="4" y="10" width="9" height="1.3" fill="#1E2C42"/></svg>
<div class="a" style="left:1879px;top:1055px;width:19px;height:19px;border-radius:50%;background:#2D2D30;border:1px solid #8A8A8A"></div>
<div class="t" style="left:1883px;top:1057px;font-size:15px;color:#fff">7</div>
<div class="a" style="left:1914px;top:1030px;width:1px;height:50px;background:#6A7380"></div>
</body></html>
